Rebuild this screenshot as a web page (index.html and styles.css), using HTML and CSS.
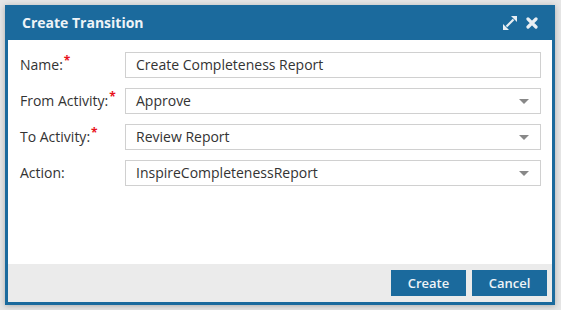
FILE: index.html
```html
<!DOCTYPE html>
<html>

<head>
    <meta http-equiv="Content-Type" content="text/html;charset=UTF-8" />
    <title>Create Transition</title>
    <link rel="stylesheet" href="styles.css">
</head>

<body>
    <div class="dialog">
        <div class="dialog_header">
            <span class="dialog_title">Create Transition</span>
            <div class="header_tools">
                <a class="tool_btn" title="Maximize">
                    <svg width="14" height="14" viewBox="0 0 14 14">
                        <path d="M3.5 10.5 L10.5 3.5" stroke="#e8eef3" stroke-width="2.2" />
                        <path d="M14 0 L14 6 L8 0 Z" fill="#e8eef3" />
                        <path d="M0 14 L0 8 L6 14 Z" fill="#e8eef3" />
                    </svg>
                </a>
                <a class="tool_btn" title="Close">
                    <svg width="12" height="12" viewBox="0 0 12 12">
                        <path d="M2 2 L10 10 M10 2 L2 10" stroke="#e8eef3" stroke-width="3.2" stroke-linecap="round" />
                    </svg>
                </a>
            </div>
        </div>
        <div class="dialog_body">
            <div class="form_grid">
                <label class="form_label">Name:<sup class="req">*</sup></label>
                <div class="field">Create Completeness Report</div>

                <label class="form_label">From Activity:<sup class="req">*</sup></label>
                <div class="field select">Approve<span class="caret"></span></div>

                <label class="form_label">To Activity:<sup class="req">*</sup></label>
                <div class="field select">Review Report<span class="caret"></span></div>

                <label class="form_label">Action:</label>
                <div class="field select">InspireCompletenessReport<span class="caret"></span></div>
            </div>
        </div>
        <div class="dialog_footer">
            <button class="btn">Create</button>
            <button class="btn">Cancel</button>
        </div>
    </div>
</body>

</html>
```

FILE: styles.css
```css
* {
    margin: 0;
    padding: 0;
    box-sizing: border-box;
}

html {
    font-family: "Open Sans", "Liberation Sans", sans-serif;
    font-size: 14px;
    color: #333;
}

body {
    background: #e6e6e6;
    padding: 5px;
}

.dialog {
    width: 550px;
    height: 300px;
    border: 3px solid #1b6a9d;
    border-top: 0;
    background: #fff;
    display: flex;
    flex-direction: column;
    box-shadow: 0 1px 6px rgba(0, 0, 0, .25);
}

.dialog_header {
    height: 35px;
    margin: 0 -3px;
    padding: 0 17px 0 17px;
    background: #1b6a9d;
    display: flex;
    align-items: center;
    justify-content: space-between;
}

.dialog_title {
    color: #eef3f7;
    font-weight: bold;
    font-size: 14px;
}

.header_tools {
    display: flex;
    align-items: center;
    gap: 9px;
}

.tool_btn {
    display: flex;
    cursor: pointer;
}

.dialog_body {
    flex: 1;
    padding: 12px 11px 0 12px;
}

.form_grid {
    display: grid;
    grid-template-columns: 105px 1fr;
    grid-auto-rows: 26px;
    row-gap: 10px;
}

.form_label {
    display: flex;
    align-items: center;
    padding-bottom: 1px;
}

.req {
    color: #e8121b;
    font-size: 12px;
    font-weight: bold;
    align-self: flex-start;
    margin-top: 0;
    margin-left: 1px;
}

.field {
    border: 1px solid #d0d0d0;
    padding: 0 10px 1px;
    display: flex;
    align-items: center;
    position: relative;
}

.caret {
    position: absolute;
    right: 11px;
    top: 10px;
    border-left: 5px solid transparent;
    border-right: 5px solid transparent;
    border-top: 5px solid #888;
}

.dialog_footer {
    height: 38px;
    background: #ebebeb;
    display: flex;
    align-items: center;
    justify-content: flex-end;
    gap: 6px;
    padding: 0 5px 0 0;
}

.btn {
    width: 75px;
    height: 26px;
    border: 0;
    background: #1b6a9d;
    color: #eef3f7;
    font-family: "Open Sans", "Liberation Sans", sans-serif;
    font-size: 13px;
    font-weight: 600;
    cursor: pointer;
}
```
